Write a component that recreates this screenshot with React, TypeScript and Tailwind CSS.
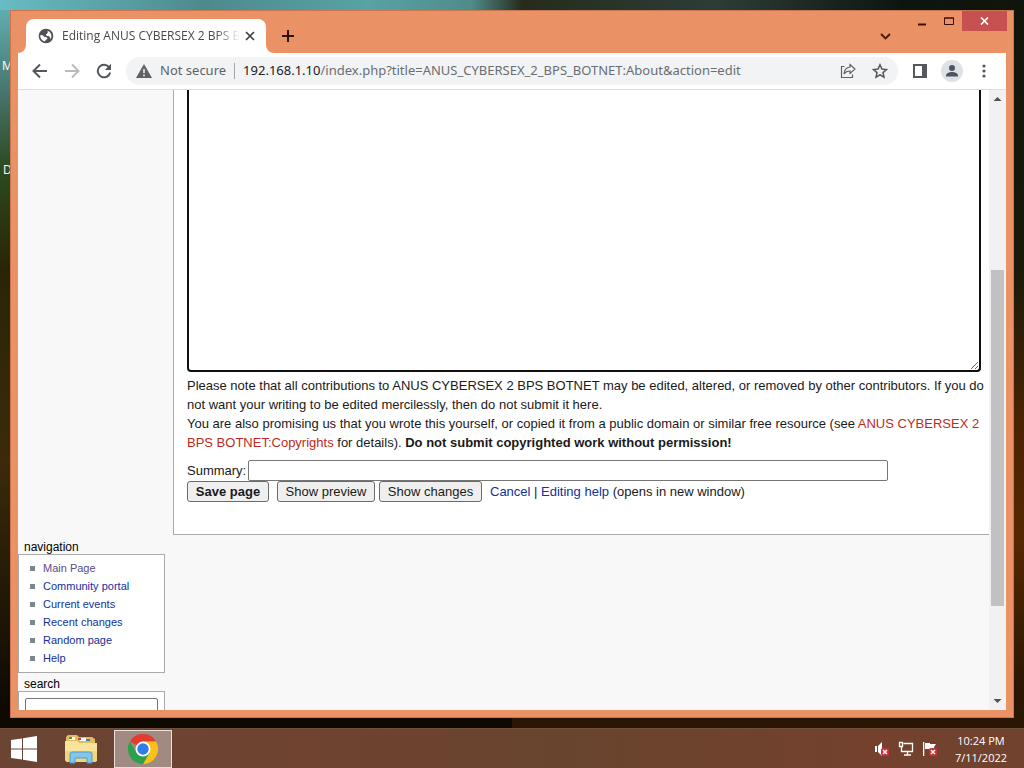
import type { ReactNode } from "react";

const navLinks = [
  { href: "#main", label: "Main Page", visited: true },
  { href: "#portal", label: "Community portal" },
  { href: "#events", label: "Current events" },
  { href: "#recent", label: "Recent changes" },
  { href: "#random", label: "Random page" },
  { href: "#help", label: "Help" },
];

function Globe() {
  return (
    <svg width="16" height="16" viewBox="0 0 24 24" aria-hidden="true" className="shrink-0">
      <path
        fill="#4d5156"
        d="M12 1a11 11 0 1 0 0 22 11 11 0 0 0 0-22zM10 20.300A8.500 8.500 0 0 1 3.600 10.500l3.400.5 3 2.500h2.500l2 2.500-2.500 1.500zM18.500 17c.3-1.500-.5-3.500-2-4.500l-3-.5-2-2 2-1.500 1.500-2.500-1.500-2.200a8.500 8.500 0 0 1 5 13.200z"
      />
    </svg>
  );
}

// Curved feet joining the active tab to the toolbar
function TabFoot({ className }: { className: string }) {
  return (
    <svg width="8" height="8" viewBox="0 0 8 8" aria-hidden="true" className={className}>
      <path d="M8 0v8H0a8 8 0 0 0 8-8z" fill="#fff" />
    </svg>
  );
}

function TitleBar() {
  return (
    <header className="flex h-[42px] items-start pr-[6px] pl-[15px]">
      <div className="relative mt-2 flex h-[34px] w-60 items-center rounded-t-lg bg-white pr-[6px] pl-3">
        <TabFoot className="absolute bottom-0 -left-2" />
        <TabFoot className="absolute -right-2 bottom-0 -scale-x-100" />
        <Globe />
        <span className="ml-2 flex-1 overflow-hidden text-[12px] whitespace-nowrap text-[#45494d] [mask-image:linear-gradient(to_right,black_86%,transparent)]">
          Editing ANUS CYBERSEX 2 BPS BOTNET
        </span>
        <button aria-label="Close tab" className="flex size-5 items-center justify-center">
          <svg width="10" height="10" viewBox="0 0 10 10" aria-hidden="true">
            <path d="M1 1l8 8M9 1L1 9" stroke="#3c4043" strokeWidth="1.700" />
          </svg>
        </button>
      </div>
      <button aria-label="New tab" className="mt-[15px] ml-3 flex size-5 items-center justify-center">
        <svg width="12" height="12" viewBox="0 0 12 12" aria-hidden="true">
          <path d="M6 0v12M0 6h12" stroke="#2d1309" strokeWidth="2" />
        </svg>
      </button>
      <button aria-label="Search tabs" className="mt-[17px] mr-[13px] ml-auto flex h-4 w-5 items-center justify-center">
        <svg width="11" height="7" viewBox="0 0 11 7" aria-hidden="true">
          <path d="M1 1l4.500 4.500L10 1" fill="none" stroke="#4a1709" strokeWidth="1.800" />
        </svg>
      </button>
      <button aria-label="Minimize" className="flex h-[22px] w-[27px] items-center justify-center">
        <svg width="10" height="10" viewBox="0 0 10 10" aria-hidden="true">
          <path d="M1 7.500h8" stroke="#3a0d05" strokeWidth="2" />
        </svg>
      </button>
      <button aria-label="Maximize" className="flex h-5 w-[27px] items-center justify-center">
        <svg width="10" height="8" viewBox="0 0 10 8" aria-hidden="true">
          <path d="M.5 1h9v6.500h-9zM0 1h10" fill="none" stroke="#3a0d05" />
        </svg>
      </button>
      <button aria-label="Close" className="flex h-5 w-[45px] items-center justify-center bg-[#c75050]">
        <svg width="9" height="8" viewBox="0 0 9 8" aria-hidden="true">
          <path d="M1 .5l7 7M8 .5l-7 7" stroke="#fff" strokeWidth="1.700" />
        </svg>
      </button>
    </header>
  );
}

function ToolButton({ label, children }: { label: string; children: ReactNode }) {
  return (
    <button aria-label={label} className="flex h-7 w-8 shrink-0 items-center justify-center">
      {children}
    </button>
  );
}

function Toolbar() {
  return (
    <div className="mx-[7px] flex h-[37px] items-center border-b border-[#dcdfe2] bg-white px-[6px] font-['Noto_Sans',sans-serif]">
      <ToolButton label="Back">
        <svg width="16" height="16" viewBox="0 0 16 16" aria-hidden="true">
          <path d="M15 8H2M8 1.500L1.500 8 8 14.500" fill="none" stroke="#54575b" strokeWidth="2" />
        </svg>
      </ToolButton>
      <ToolButton label="Forward">
        <svg width="16" height="16" viewBox="0 0 16 16" aria-hidden="true">
          <path d="M1 8h13M8 1.500L14.500 8 8 14.500" fill="none" stroke="#b9bbbe" strokeWidth="2" />
        </svg>
      </ToolButton>
      <ToolButton label="Reload">
        <svg width="16" height="16" viewBox="0 0 16 16" aria-hidden="true">
          <path d="M13.300 4.500A6.300 6.300 0 1 0 14.200 9.500" fill="none" stroke="#54575b" strokeWidth="2" />
          <path d="M15 .8V7H8.800z" fill="#54575b" />
        </svg>
      </ToolButton>
      <div className="ml-[6px] flex h-7 min-w-0 flex-1 items-center rounded-full bg-[#f1f3f4] pr-[2px] pl-[10px]">
        <svg width="16" height="14" viewBox="0 0 16 14" aria-hidden="true" className="shrink-0">
          <path d="M8 0l8 14H0z" fill="#5f6368" />
          <path d="M8 5v4M8 10.500v1.700" stroke="#f1f3f4" strokeWidth="1.600" />
        </svg>
        <span className="ml-2 shrink-0 text-[13px] text-[#5f6368]">Not secure</span>
        <span className="mx-2 h-4 w-px shrink-0 bg-[#a5a8ab]" />
        <p className="flex-1 truncate text-[13px] text-[#6a6e73]">
          <span className="text-[#202124]">192.168.1.10</span>
          /index.php?title=ANUS_CYBERSEX_2_BPS_BOTNET:About&amp;action=edit
        </p>
        <ToolButton label="Share">
          <svg width="16" height="16" viewBox="0 0 16 16" aria-hidden="true">
            <path d="M4.500 3.500H1.500v11h11v-3" fill="none" stroke="#5f6368" strokeWidth="1.200" />
            <path d="M10 1.500L15 6l-5 4.500V8C7 8 5.300 9 4 11c.3-4 2.300-6.500 6-7z" fill="none" stroke="#5f6368" strokeWidth="1.200" />
          </svg>
        </ToolButton>
        <ToolButton label="Bookmark">
          <svg width="16" height="16" viewBox="0 0 16 16" aria-hidden="true">
            <path d="M8 1.800l1.900 4.300 4.600.4-3.500 3.100 1 4.600L8 11.800l-4 2.400 1-4.600L1.500 6.500l4.600-.4z" fill="none" stroke="#54575b" strokeWidth="1.500" />
          </svg>
        </ToolButton>
      </div>
      <div className="ml-[6px] flex">
        <ToolButton label="Side panel">
          <svg width="14" height="14" viewBox="0 0 14 14" aria-hidden="true">
            <path d="M1 1h12v12H1z" fill="none" stroke="#54575b" strokeWidth="2" />
            <path d="M9 1h4v12H9z" fill="#54575b" />
          </svg>
        </ToolButton>
        <ToolButton label="Profile">
          <svg width="22" height="22" viewBox="0 0 22 22" aria-hidden="true">
            <circle cx="11" cy="11" r="11" fill="#dee1e6" />
            <circle cx="11" cy="8" r="3" fill="#4d5561" />
            <path d="M5 16c0-3 3-4 6-4s6 1 6 4v.5H5z" fill="#4d5561" />
          </svg>
        </ToolButton>
        <ToolButton label="Menu">
          <svg width="4" height="14" viewBox="0 0 4 14" aria-hidden="true" fill="#54575b">
            <circle cx="2" cy="2" r="1.600" />
            <circle cx="2" cy="7" r="1.600" />
            <circle cx="2" cy="12" r="1.600" />
          </svg>
        </ToolButton>
      </div>
    </div>
  );
}

function Sidebar() {
  return (
    <aside className="flex w-[155px] shrink-0 flex-col pt-[451px] pr-2 text-[12px] text-black">
      <h2 className="pl-[6px] leading-[13px]">navigation</h2>
      <nav className="border border-[#aaa] bg-white pt-1 pb-[5px] pl-[11px] text-[11px]">
        <ul>
          {navLinks.map((link) => (
            <li key={link.href} className="flex h-[18px] items-center gap-2">
              <span className="size-[5px] bg-[#7a8a8a]" />
              <a href={link.href} className={link.visited ? "text-[#5a4a8c]" : "text-[#12309c]"}>
                {link.label}
              </a>
            </li>
          ))}
        </ul>
      </nav>
      <label htmlFor="wiki-search" className="mt-[5px] pl-[6px] leading-[13px]">
        search
      </label>
      <div className="border border-[#aaa] bg-white px-[6px] pt-[6px] pb-2">
        <input id="wiki-search" type="search" className="h-5 w-full rounded-xs border border-[#767676] bg-white" />
      </div>
    </aside>
  );
}

function EditPage() {
  const button = "h-[21px] rounded-[3px] border border-[#6b6b6b] bg-[#efefef] text-[#1a1a1a]";
  return (
    <main className="min-w-0 flex-1">
      <form className="h-[445px] border-b border-l border-[#aaa] bg-white pr-2 pl-[13px] text-[13px] leading-[19px] text-[#1a1a1a]">
        <textarea
          aria-label="Page text"
          className="block h-[282px] w-full resize rounded-b-sm border-2 border-t-0 border-[#101010] bg-white outline-none"
        />
        <p className="mt-1 -mr-2">
          Please note that all contributions to ANUS CYBERSEX 2 BPS BOTNET may be edited, altered, or removed by other
          contributors. If you do not want your writing to be edited mercilessly, then do not submit it here.
          <br />
          You are also promising us that you wrote this yourself, or copied it from a public domain or similar free
          resource (see{" "}
          <a href="#copyrights" className="text-[#bf2a20]">
            ANUS CYBERSEX 2 BPS BOTNET:Copyrights
          </a>{" "}
          for details). <strong>Do not submit copyrighted work without permission!</strong>
        </p>
        <div className="mt-2 flex items-center">
          <label htmlFor="summary" className="w-[61px]">
            Summary:
          </label>
          <input id="summary" type="text" className="h-[21px] w-[640px] rounded-xs border border-[#767676] bg-white px-1" />
        </div>
        <div className="flex items-center whitespace-nowrap">
          <button type="button" className={`${button} w-[82px] font-bold`}>
            Save page
          </button>
          <button type="button" className={`${button} ml-2 w-[98px]`}>
            Show preview
          </button>
          <button type="button" className={`${button} ml-1 w-[103px]`}>
            Show changes
          </button>
          <span className="ml-2">
            <a href="#cancel" className="text-[#12309c]">
              Cancel
            </a>
            {" | "}
            <a href="#edithelp" className="text-[#12309c]">
              Editing help
            </a>
            {" (opens in new window)"}
          </span>
        </div>
      </form>
    </main>
  );
}

function ScrollBar() {
  return (
    <div className="flex w-[17px] shrink-0 flex-col items-center justify-between bg-[#f1f1f1]" aria-hidden="true">
      <svg width="17" height="17" viewBox="0 0 17 17">
        <path d="M4.500 11h8l-4-4z" fill="#505050" />
      </svg>
      <div className="mt-[163px] h-[336px] w-[13px] bg-[#c1c1c1]" />
      <svg width="17" height="17" viewBox="0 0 17 17" className="mt-auto">
        <path d="M4.500 6h8l-4 4z" fill="#505050" />
      </svg>
    </div>
  );
}

function Taskbar() {
  return (
    <footer className="flex h-10 shrink-0 items-center border-t border-[#70503f] bg-[linear-gradient(to_right,#6b4434,#6f4330_30%,#68442e_55%,#74412d_85%,#70432f)] text-white">
      <button aria-label="Start" className="flex w-12 items-center justify-center">
        <svg width="26" height="26" viewBox="0 0 26 26" aria-hidden="true" fill="#fff">
          <path d="M0 4l11-1.500V12.500H0zM12 2.300L26 0v12.500H12zM0 13.500h11v10L0 22zM12 13.500h14V26l-14-2.300z" />
        </svg>
      </button>
      <button aria-label="File Explorer" className="ml-1 flex w-[58px] items-center justify-center">
        <svg width="34" height="32" viewBox="0 0 34 32" aria-hidden="true">
          <path d="M2 4l2-2h9l2 2h13l3 2v20H2z" fill="#e0bd62" />
          <path d="M5 4h6v3H5zM16 5h6v3h-6z" fill="#fff" />
          <path d="M5 4h3v2H5z" fill="#3fa24b" />
          <path d="M14 5h3v2h-3z" fill="#c9432f" />
          <path d="M22 6h4v2h-4z" fill="#3982c7" />
          <path d="M1 8h12l2 2h18v18l-2 1H3l-2-2z" fill="#f8e39a" />
          <path d="M1 18h32v9l-2 2H3l-2-2z" fill="#f2d67d" />
          <path d="M6 30V21q0-2 2-2h18q2 0 2 2v9h-5v-5H11v5z" fill="#83c6ea" stroke="#4b9bd0" />
        </svg>
      </button>
      <button aria-label="Google Chrome" className="ml-1 flex h-[38px] w-[58px] items-center justify-center border border-[#eadfdb] bg-[#a08a82]">
        <svg width="30" height="30" viewBox="0 0 30 30" aria-hidden="true">
          <path d="M15 15L2 7.500A15 15 0 0 1 28 7.500H15z" fill="#e33b2e" />
          <path d="M15 7.500h13A15 15 0 0 1 15 30l6.500-11.200z" fill="#fbc116" />
          <path d="M2 7.500A15 15 0 0 0 15 30l6.500-11.200-13 0z" fill="#2da04c" />
          <circle cx="15" cy="15" r="7.500" fill="#fff" />
          <circle cx="15" cy="15" r="5.700" fill="#2f7de9" />
        </svg>
      </button>
      <div className="ml-auto flex items-center gap-2">
        <svg width="16" height="16" viewBox="0 0 16 16" aria-label="Volume muted">
          <path d="M1 5h2v6H1zM4 5l4-4v14l-4-4z" fill="#fff" />
          <rect x="7" y="7" width="8" height="8" rx="2" fill="#c9313a" />
          <path d="M9 9l4 4M13 9l-4 4" stroke="#fff" strokeWidth="1.400" />
        </svg>
        <svg width="16" height="16" viewBox="0 0 16 16" aria-label="Network">
          <path d="M5.500 2.500h9v8H3.500V6M1.500 1.500h3v4h-3zM9.500 10.500v3M6 14h7" fill="none" stroke="#fff" strokeWidth="1.300" />
        </svg>
        <svg width="16" height="16" viewBox="0 0 16 16" aria-label="Action center">
          <path d="M1 1h1.300v14H1zM3 2h5v1h6l-2 3 1 3H8V8H3z" fill="#fff" />
          <rect x="7" y="7" width="8" height="8" rx="2" fill="#c9313a" />
          <path d="M9 9l4 4M13 9l-4 4" stroke="#fff" strokeWidth="1.400" />
        </svg>
      </div>
      <div className="mx-3 w-[62px] text-center text-[11px] leading-[17px]">
        <div>10:24 PM</div>
        <div>7/11/2022</div>
      </div>
    </footer>
  );
}

export default function App() {
  return (
    <div className="relative flex h-screen flex-col overflow-hidden bg-[linear-gradient(to_right,#68bcc4,#4d8a8c_20%,#58a3a4_36%,#4f8c8a_46%,#262c1c_51%,#2e3c38_70%,#0e1510_88%,#10150c),linear-gradient(to_bottom,#63b4ba_0,#47756d_12%,#2c4a20_22%,#2a2506_35%,#3c2a0a_60%,#0e0a02_92%),linear-gradient(to_bottom,#10150c_0,#1a1a08_35%,#4a2303_55%,#552802_70%,#2a1603_90%)] bg-size-[100%_10px,50%_100%,100%_100%] bg-no-repeat font-['Open_Sans',sans-serif]">
      <span className="absolute top-[57px] left-[2px] text-[12px] text-white">M</span>
      <span className="absolute top-[161px] left-[3px] text-[12px] text-white">D</span>
      <div className="relative m-[10px] flex min-h-0 flex-1 flex-col border border-[#c9754f] bg-[#ea9165] pb-[7px]">
        <TitleBar />
        <Toolbar />
        <div className="mx-[7px] flex min-h-0 flex-1 overflow-hidden bg-[#f8f8f8] font-['Liberation_Sans',Arial,sans-serif]">
          <Sidebar />
          <EditPage />
          <ScrollBar />
        </div>
      </div>
      <Taskbar />
    </div>
  );
}
